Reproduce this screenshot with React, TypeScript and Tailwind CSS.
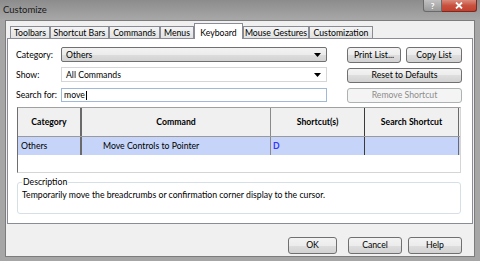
import React from "react";

const btnFace =
  "bg-[linear-gradient(#f3f3f3_0%,#ececec_50%,#dedede_50%,#d2d2d2_100%)] border-[#707070] text-black";

function Btn({
  children,
  className = "",
  disabled = false,
}: {
  children: React.ReactNode;
  className?: string;
  disabled?: boolean;
}) {
  return (
    <button
      className={`flex items-center justify-center rounded-[3px] border leading-none ${
        disabled ? "border-[#adb2b5] bg-[#f4f4f4] text-[#8d8d8d]" : btnFace
      } ${className}`}
    >
      {children}
    </button>
  );
}

function Arrow() {
  return (
    <svg width="7" height="4" viewBox="0 0 7 4" className="mr-[5px]">
      <path d="M0 0h7L3.5 4z" fill="#000" />
    </svg>
  );
}

const tabs = [
  { label: "Toolbars", w: "w-[40px]" },
  { label: "Shortcut Bars", w: "w-[59px]" },
  { label: "Commands", w: "w-[51px]" },
  { label: "Menus", w: "w-[34px]" },
  { label: "Keyboard", w: "w-[49px]", active: true },
  { label: "Mouse Gestures", w: "w-[66px]" },
  { label: "Customization", w: "w-[64px]" },
];

export default function App() {
  return (
    <div className="flex h-[261px] w-[480px] flex-col bg-[#a6a6a6] font-['Lato','Noto_Sans',sans-serif] text-[8.7px] text-black">
      {/* title bar */}
      <div className="flex h-[20px] shrink-0 items-start bg-gradient-to-b from-[#8c8c8c] to-[#a8a8a8]">
        <div className="pl-[3px] pt-[3px] text-[9.5px] text-[#1a1a1a]">Customize</div>
        <div className="ml-auto mr-[3px] flex">
          <div className="flex h-[12px] w-[19px] items-center justify-center rounded-bl-[3px] border border-t-0 border-[#6a6a6a] bg-gradient-to-b from-[#c2c2c2] to-[#9a9a9a] text-[8px] font-bold text-white">
            ?
          </div>
          <div className="flex h-[12px] w-[35px] items-center justify-center rounded-br-[3px] border border-l-0 border-t-0 border-[#7a2a20] bg-gradient-to-b from-[#d98a7c] via-[#c9513f] to-[#c2412e]">
            <svg width="8" height="7" viewBox="0 0 8 7">
              <path d="M1 0.5l6 6M7 0.5l-6 6" stroke="#fff" strokeWidth="1.8" />
            </svg>
          </div>
        </div>
      </div>

      {/* client area */}
      <div className="mx-[5px] mb-[4px] flex flex-1 flex-col border border-[#7c7c7c] bg-[#f0f0f0] px-[1px]">
        <div className="mt-[3px] flex h-[14px] items-end pl-[3px]">
          {tabs.map((t) =>
            t.active ? (
              <div
                key={t.label}
                className={`${t.w} relative z-10 mb-[-1px] flex h-[16px] justify-center border border-b-0 border-[#898c95] bg-white pt-[2px]`}
              >
                {t.label}
              </div>
            ) : (
              <div
                key={t.label}
                className={`${t.w} flex h-[12px] items-center justify-center border border-b-0 border-[#898c95] bg-gradient-to-b from-[#f4f4f4] to-[#e2e2e2]`}
              >
                {t.label}
              </div>
            )
          )}
        </div>

        {/* tab panel */}
        <div className="flex h-[186px] flex-col border border-[#898c95] bg-white pl-[8px] pt-[8px]">
          <div className="flex">
            <div className="grid w-[311px] grid-cols-[45px_266px] grid-rows-[15px_15px_15px] gap-y-[5px]">
              <div className="flex items-center">Category:</div>
              <div className={`flex items-center justify-between rounded-[2px] border pl-[4px] ${btnFace}`}>
                <span>Others</span>
                <Arrow />
              </div>
              <div className="flex items-center">Show:</div>
              <div className="flex items-center justify-between border border-[#d6d6d6] bg-white pl-[4px]">
                <span>All Commands</span>
                <Arrow />
              </div>
              <div className="mt-[1px] flex items-center">Search for:</div>
              <div className="mt-[1px] flex items-center border border-[#9fb9d6] bg-white pl-[2px]">
                move<span className="ml-px inline-block h-[9px] w-px bg-black" />
              </div>
            </div>
            <div className="ml-[20px] grid w-[115px] grid-rows-[16px_15px_15px] gap-y-[5px]">
              <div className="flex gap-[5px]">
                <Btn className="w-[54px]">Print List...</Btn>
                <Btn className="w-[56px]">Copy List</Btn>
              </div>
              <Btn>Reset to Defaults</Btn>
              <Btn disabled>Remove Shortcut</Btn>
            </div>
          </div>

          {/* command table */}
          <div className="ml-[1px] mt-[4px] flex h-[66px] w-[444px] flex-col border border-l-[#6e6e6e] border-t-[#a0a0a0] border-r-[#d5d5d5] border-b-[#d5d5d5] bg-white">
            <div className="flex h-[29px] border-b border-[#9a9a9a] bg-[#f0f0f0] font-bold">
              <div className="flex w-[64px] items-center justify-center border-r-2 border-[#6a6a6a]">Category</div>
              <div className="flex w-[189px] items-center justify-center border-r border-[#8a8a8a]">Command</div>
              <div className="flex w-[94px] items-center justify-center border-r border-[#3a3a3a]">Shortcut(s)</div>
              <div className="flex w-[94px] items-center justify-center border-r border-[#6a6a6a]">Search Shortcut</div>
            </div>
            <div className="flex h-[18px] bg-[#c5d4f8]">
              <div className="flex w-[64px] items-center border-r-2 border-[#6a6a6a] pl-[3px]">Others</div>
              <div className="flex w-[189px] items-center border-r border-[#8a8a8a] pl-[21px]">Move Controls to Pointer</div>
              <div className="flex w-[94px] items-center border-r border-[#3a3a3a] pl-[2px] font-bold text-[#3535ff]">D</div>
              <div className="flex w-[94px] items-center border-r border-[#6a6a6a]" />
            </div>
          </div>

          {/* description */}
          <fieldset className="ml-[1px] mt-[4px] h-[37px] w-[444px] rounded-[3px] border border-[#d5dfe5] px-[4px]">
            <legend className="px-[1px] leading-[10px]">Description</legend>
            <div className="pt-[1px]">
              Temporarily move the breadcrumbs or confirmation corner display to the cursor.
            </div>
          </fieldset>
        </div>

        {/* dialog buttons */}
        <div className="mt-[13px] flex h-[17px] pl-[281px]">
          <Btn className="w-[49px]">OK</Btn>
          <Btn className="ml-[11px] w-[54px]">Cancel</Btn>
          <Btn className="ml-[6px] w-[54px]">Help</Btn>
        </div>
      </div>
    </div>
  );
}
